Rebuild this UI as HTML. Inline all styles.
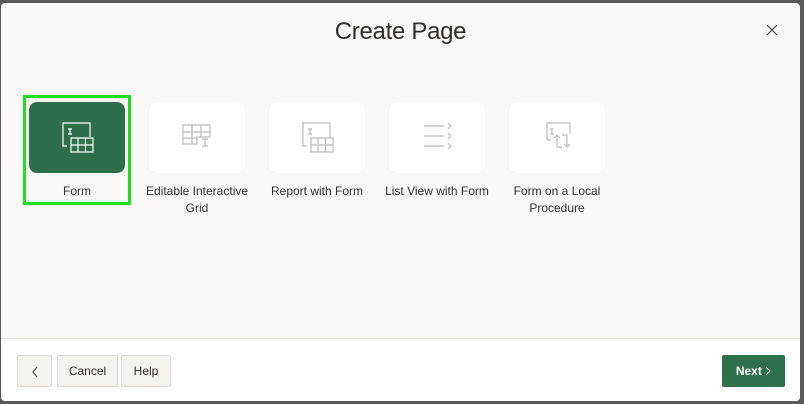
<!DOCTYPE html>
<html><head><style>
body{margin:0;width:804px;height:404px;background:#5a5a5a;font-family:"Liberation Sans",sans-serif;position:relative;overflow:hidden}
.dlg{position:absolute;left:1px;top:3px;width:799px;height:398px;background:#faf9f8;border-radius:4px;overflow:hidden}
h1{position:absolute;left:0;right:0;top:15px;margin:0;text-align:center;font-size:24px;font-weight:normal;color:#312d2a;letter-spacing:-0.3px}
.x{position:absolute;left:765px;top:21px}
.tile{position:absolute;top:99px;width:96px;height:71px;background:#fff;border-radius:8px;box-shadow:0 0 1px rgba(0,0,0,.1)}
.lbl{position:absolute;top:180px;width:120px;text-align:center;font-size:12px;line-height:17px;color:#312d2a}
.sel{position:absolute;left:22px;top:92px;width:102px;height:104px;border:3px solid #1ee01e}
.foot{position:absolute;left:0;top:335px;width:799px;height:63px;background:#fff;border-top:1px solid #e6e4e1}
.btn{position:absolute;top:16px;height:30px;border:1px solid #ddd9d4;background:#f5f3f0;border-radius:2px;font-size:12px;color:#312d2a;line-height:30px;text-align:center}
.next{position:absolute;left:721px;top:16px;width:63px;height:32px;background:#2e7049;border-radius:2px;color:#fff;font-size:12px;font-weight:bold;line-height:32px;text-align:center}
</style></head><body>
<div class="dlg">
<h1>Create Page</h1>
<svg class="x" width="12" height="12" stroke="#444" stroke-width="1.2"><path d="M1 1L11 11M11 1L1 11"/></svg>
<div class="sel"></div>
<div class="tile" style="left:28px;background:#2e6f4a;box-shadow:none">
<svg width="96" height="71" fill="none" stroke="#fff" stroke-width="1.2"><path d="M34 36V21H61V35M34 36V44H38"/><path d="M42 36H64V50H42ZM42 43H64M49 36V50M56.5 36V50"/><path d="M39 27H43M41 27V32M39 32H43"/></svg></div>
<div class="lbl" style="left:16px">Form</div>
<div class="tile" style="left:148px">
<svg width="96" height="71" fill="none" stroke="#bbb" stroke-width="1.2"><path d="M34 23H61V35H48V42H34ZM34 30H61M34 36H48M43 23V42M52 23V35"/><path d="M53 37H59M56 37V44M53 44H59" /></svg></div>
<div class="lbl" style="left:136px">Editable Interactive<br>Grid</div>
<div class="tile" style="left:268px">
<svg width="96" height="71" fill="none" stroke="#bbb" stroke-width="1.2"><path d="M34 36V21H61V35M34 36V44H38"/><path d="M42 36H64V50H42ZM42 43H64M49 36V50M56.5 36V50"/><path d="M39 27H43M41 27V32M39 32H43"/></svg></div>
<div class="lbl" style="left:256px">Report with Form</div>
<div class="tile" style="left:388px">
<svg width="96" height="71" fill="none" stroke="#bbb" stroke-width="1.2"><path d="M35 24H55M35 34H55M35 44H55M59 21L62 24L59 27M59 31L62 34L59 37M59 41L62 44L59 47"/></svg></div>
<div class="lbl" style="left:376px">List View with Form</div>
<div class="tile" style="left:508px">
<svg width="96" height="71" fill="none" stroke="#bbb" stroke-width="1.2"><path d="M38 38V21H61V32M38 38H42"/><path d="M41 27H45M43 27V32M41 32H45"/><path d="M48 45V33M45 36L48 33L51 36M48 45H53M53 33H58V45M55 42L58 45L61 42"/></svg></div>
<div class="lbl" style="left:496px">Form on a Local<br>Procedure</div>
<div class="foot">
<div class="btn" style="left:16px;width:33px"><svg width="8" height="12" style="vertical-align:middle" fill="none" stroke="#444" stroke-width="1.1"><path d="M6 1L2 6L6 11"/></svg></div>
<div class="btn" style="left:56px;width:59px">Cancel</div>
<div class="btn" style="left:120px;width:48px">Help</div>
<div class="next">Next <svg width="6" height="10" style="vertical-align:-1px" fill="none" stroke="#fff" stroke-width="1.1"><path d="M1 1L5 5L1 9"/></svg></div>
</div>
</div>
</body></html>
